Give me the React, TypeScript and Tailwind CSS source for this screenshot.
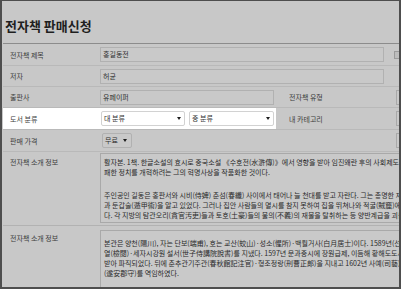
import React from "react";

function Arrow() {
  return (
    <span className="inline-block h-0 w-0 border-l-[2.5px] border-r-[2.5px] border-t-[3px] border-l-transparent border-r-transparent border-t-[#1e1e1e]" />
  );
}

function Label({ children, className = "" }: { children: React.ReactNode; className?: string }) {
  return (
    <div className={`w-[97px] shrink-0 pl-[7px] text-[7px] leading-[10px] text-[#3c3c3c] ${className}`}>
      {children}
    </div>
  );
}

function SideBox({ text = "" }: { text?: string }) {
  return (
    <div className="flex h-[15px] w-[30px] shrink-0 items-center border border-[#a9a9a9] bg-[#c9c9c9] pl-[2px] text-[7px] text-[#2a2a2a]">
      {text}
    </div>
  );
}

export default function App() {
  return (
    <div className="h-[290px] w-[402px] overflow-hidden bg-white font-['Noto_Sans_CJK_KR','Noto_Sans',sans-serif]">
      <div className="h-[289px] w-[401px] overflow-hidden border-b-2 border-l-2 border-r-2 border-t border-[#4e4e4e] bg-[#c8c8c8]">
        <div className="pl-[1px]">
          {/* Title */}
          <div className="h-[43px] border-b border-[#8c8c8c] pl-[2px] pt-[17px] text-[13px] font-bold leading-[16px] text-[#1f1f1f]">
            전자책 판매신청
          </div>

          {/* Row 1 */}
          <div className="flex h-[22px] items-center border-b border-[#b9b9b9]">
            <Label>전자책 제목</Label>
            <div className="flex h-[15px] w-[284px] shrink-0 items-center border border-[#b1b1b1] bg-[#c9c9c9] pl-[2px] text-[7px] text-[#2e2e2e]">
              홍길동전
            </div>
            <div className="ml-[10px] h-[8px] w-[10px] shrink-0 border border-[#9a9a9a] bg-[#bdbdbd]" />
          </div>

          {/* Row 2 */}
          <div className="flex h-[21px] items-center border-b border-[#b9b9b9]">
            <Label>저자</Label>
            <div className="flex h-[15px] w-[284px] shrink-0 items-center border border-[#b1b1b1] bg-[#c9c9c9] pl-[2px] text-[7px] text-[#2e2e2e]">
              허균
            </div>
          </div>

          {/* Row 3 */}
          <div className="flex h-[21px] items-center border-b border-[#b9b9b9]">
            <div className="flex w-[273px] shrink-0 items-center">
              <Label>출판사</Label>
              <div className="flex h-[15px] w-[174px] shrink-0 items-center border border-[#b1b1b1] bg-[#c9c9c9] pl-[2px] text-[7px] text-[#2e2e2e]">
                유페이퍼
              </div>
            </div>
            <div className="w-[120px] shrink-0 pl-[13px] text-[7px] leading-[10px] text-[#3c3c3c]">전자책 유형</div>
            <SideBox text="유" />
          </div>

          {/* Row 4 - highlighted */}
          <div className="flex h-[22px] items-stretch border-b border-[#b9b9b9]">
            <div className="flex w-[273px] shrink-0 items-center bg-white">
              <Label className="text-[#2a2a2a]">도서 분류</Label>
              <div className="ml-[1px] flex h-[15px] w-[84px] shrink-0 items-center justify-between rounded-[2px] border border-[#d2d2d2] bg-white pl-[2px] pr-[3px] text-[7px] text-[#333]">
                <span>대 분류</span>
                <Arrow />
              </div>
              <div className="ml-[4px] flex h-[15px] w-[85px] shrink-0 items-center justify-between rounded-[2px] border border-[#d2d2d2] bg-white pl-[2px] pr-[3px] text-[7px] text-[#333]">
                <span>중 분류</span>
                <Arrow />
              </div>
            </div>
            <div className="flex w-[120px] shrink-0 items-center pl-[13px] text-[7px] leading-[10px] text-[#3c3c3c]">
              내 카테고리
            </div>
            <div className="flex items-center">
              <SideBox text="ㄴ" />
            </div>
          </div>

          {/* Row 5 */}
          <div className="flex h-[22px] items-center border-b border-[#b9b9b9]">
            <Label>판매 가격</Label>
            <div className="ml-[2px] flex h-[15px] w-[30px] shrink-0 items-center justify-between rounded-[2px] border border-[#b1b1b1] bg-[#c9c9c9] pl-[2px] pr-[4px] text-[7px] text-[#2e2e2e]">
              <span>무료</span>
              <Arrow />
            </div>
            <div className="ml-[264px]">
              <SideBox />
            </div>
          </div>

          {/* Row 6 */}
          <div className="flex h-[74px] items-start border-b border-[#b2b2b2]">
            <Label className="pt-[5px]">전자책 소개 정보</Label>
            <div className="mt-[1px] h-[70px] w-[320px] shrink-0 overflow-hidden whitespace-nowrap border border-[#a9a9a9] bg-[#c9c9c9] pl-[3px] pt-[3px] text-[7px] leading-[10px] text-[#2a2a2a]">
              <div>활자본. 1책. 한글소설의 효시로 중국소설 《수호전(水滸傳)》에서 영향을 받아 임진왜란 후의 사회제도의 모순과 부</div>
              <div>패한 정치를 개혁하려는 그의 혁명사상을 작품화한 것이다.</div>
              <div className="h-[13px]" />
              <div>주인공인 길동은 홍판서와 시비(侍婢) 춘섬(春纖) 사이에서 태어나 늘 천대를 받고 자란다. 그는 총명한 재주</div>
              <div>과 둔갑술(遁甲術)을 알고 있었다. 그러나 집안 사람들의 멸시를 참지 못하여 집을 뛰쳐나와 적굴(賊窟)에 들어간</div>
              <div>다. 각 지방의 탐관오리(貪官汚吏)들과 토호(土豪)들의 불의(不義)의 재물을 탈취하는 등 양반계급을 괴롭힌다.</div>
            </div>
          </div>

          {/* Row 7 */}
          <div className="flex h-[70px] items-start">
            <Label className="pt-[7px]">전자책 소개 정보</Label>
            <div className="mt-[4px] h-[70px] w-[320px] shrink-0 overflow-hidden whitespace-nowrap border border-[#a9a9a9] bg-[#c9c9c9] pl-[3px] pt-[7px] text-[7px] leading-[10px] text-[#2a2a2a]">
              <div>본관은 양천(陽川), 자는 단보(端甫), 호는 교산(蛟山)·성소(惺所)·백월거사(白月居士)이다. 1589년(선조 22)</div>
              <div>열(檢閱)·세자시강원 설서(世子侍講院說書)를 지냈다. 1597년 문과중시에 장원급제, 이듬해 황해도도사가 되</div>
              <div>받아 파직되었다. 뒤에 춘추관기주관(春秋館記注官)·형조정랑(刑曹正郞)을 지내고 1602년 사예(司藝)·사복시정</div>
              <div>(遂安郡守)를 역임하였다.</div>
            </div>
          </div>
        </div>
      </div>
    </div>
  );
}
